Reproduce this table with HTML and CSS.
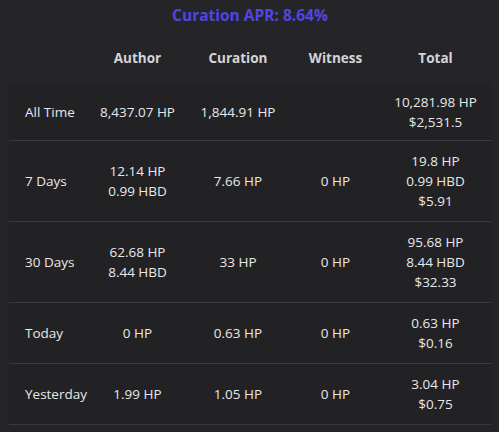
FILE: index.html
```html
<!DOCTYPE html>
<html>
<head>
<meta charset="utf-8">
<link rel="stylesheet" href="styles.css">
</head>
<body>
<div class="wrap">
  <h2 class="title">Curation APR: 8.64%</h2>
  <table class="rewards">
    <colgroup>
      <col class="c-label"><col class="c-author"><col class="c-cur"><col class="c-wit"><col class="c-total">
    </colgroup>
    <thead>
      <tr><th></th><th>Author</th><th>Curation</th><th>Witness</th><th>Total</th></tr>
    </thead>
    <tbody>
      <tr class="first">
        <td class="label">All Time</td>
        <td>8,437.07 HP</td>
        <td>1,844.91 HP</td>
        <td></td>
        <td>10,281.98 HP<br>$2,531.5</td>
      </tr>
      <tr>
        <td class="label">7 Days</td>
        <td>12.14 HP<br>0.99 HBD</td>
        <td>7.66 HP</td>
        <td>0 HP</td>
        <td>19.8 HP<br>0.99 HBD<br>$5.91</td>
      </tr>
      <tr>
        <td class="label">30 Days</td>
        <td>62.68 HP<br>8.44 HBD</td>
        <td>33 HP</td>
        <td>0 HP</td>
        <td>95.68 HP<br>8.44 HBD<br>$32.33</td>
      </tr>
      <tr>
        <td class="label">Today</td>
        <td>0 HP</td>
        <td>0.63 HP</td>
        <td>0 HP</td>
        <td>0.63 HP<br>$0.16</td>
      </tr>
      <tr>
        <td class="label">Yesterday</td>
        <td>1.99 HP</td>
        <td>1.05 HP</td>
        <td>0 HP</td>
        <td>3.04 HP<br>$0.75</td>
      </tr>
    </tbody>
  </table>
</div>
</body>
</html>
```
FILE: styles.css
```css
html, body {
  margin: 0;
  padding: 0;
  background: #252528;
}
body {
  font-family: "Open Sans", "Noto Sans", sans-serif;
  color: #e8e8ea;
  font-size: 13.5px;
}
.wrap {
  padding: 4px 8px 0 9px;
}
.title {
  margin: 0;
  text-align: center;
  font-size: 15.5px;
  font-weight: 700;
  color: #4f46e5;
  line-height: 22px;
  height: 22px;
}
.rewards {
  width: 482px;
  border-collapse: collapse;
  table-layout: fixed;
  margin-top: 20px;
}
.c-label { width: 81px; }
.c-author { width: 95px; }
.c-cur { width: 106px; }
.c-wit { width: 89px; }
.c-total { width: 111px; }
.rewards th {
  font-weight: 700;
  color: #d4d4d8;
  font-size: 13.5px;
  line-height: 20px;
  padding: 2px 0 15px;
  text-align: center;
}
.rewards tbody tr {
  background: #222225;
  border-bottom: 1px solid #3a3a3e;
}
.rewards td {
  text-align: center;
  line-height: 20px;
  padding: 10px 0;
  vertical-align: middle;
}
.rewards tr.first td {
  padding-top: 9px;
  padding-bottom: 8px;
}
.rewards td.label {
  text-align: left;
  padding-left: 16px;
}
```
